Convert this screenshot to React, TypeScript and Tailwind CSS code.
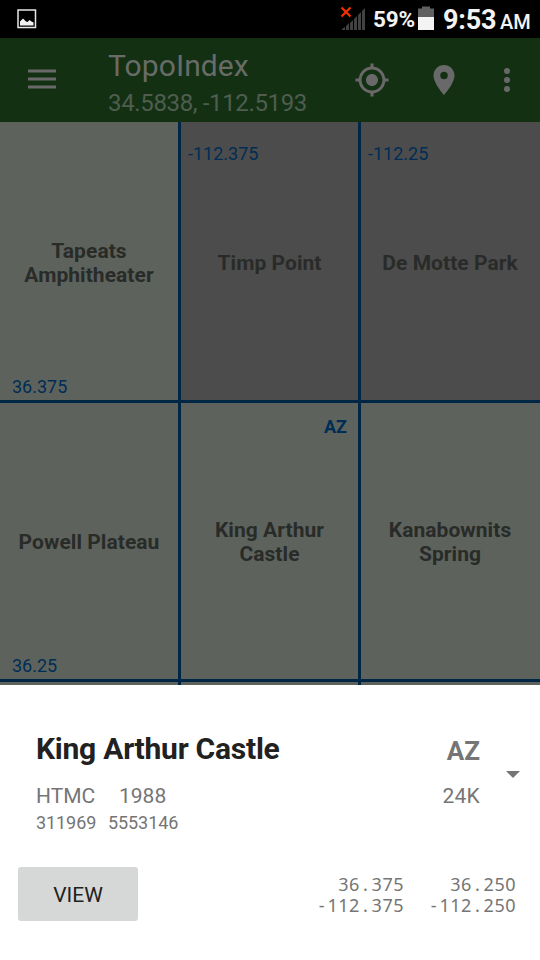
import React from "react";

type CellProps = {
  name: string;
  available?: boolean;
  lat?: string;
  lon?: string;
  state?: string;
  last?: boolean;
  top?: boolean;
};

function Cell({ name, available, lat, lon, state, last, top }: CellProps) {
  return (
    <div
      className={
        "relative flex items-center justify-center border-[#002646] px-3 text-center text-[21px] leading-6 font-bold tracking-[0.050px] text-[#292b29] " +
        (available ? "bg-[#5d635c] " : "bg-[#4c4c4c] ") +
        (top ? "pt-1 " : "pt-[2px] ") +
        (last ? "pr-[13px]" : "border-r-[3px]")
      }
    >
      <span className="whitespace-pre-line">{name}</span>
      {lon && (
        <span className="absolute top-[21px] left-[7px] text-lg leading-[22px] font-normal tracking-normal text-[#002d55]">{lon}</span>
      )}
      {lat && (
        <span className="absolute bottom-[2px] left-3 text-lg leading-[22px] font-normal tracking-normal text-[#002d55]">{lat}</span>
      )}
      {state && (
        <span className="absolute top-[13px] right-[11px] text-lg leading-[22px] font-bold tracking-normal text-[#002d55]">{state}</span>
      )}
    </div>
  );
}

function StatusBar() {
  return (
    <div className="flex h-[38px] items-center bg-black text-[#f3f3f3]">
      <svg className="ml-[17px] h-5 w-5" viewBox="0 0 20 20">
        <rect x="1" y="1" width="17.5" height="17.5" fill="none" stroke="#e8e8e8" strokeWidth="1.5" />
        <path d="M3 16.500V12.500L6 9.500l3 3 1.500.500 2-2 2 1.500 2 1v3z" fill="#f3f3f3" />
      </svg>
      <svg className="ml-[303px] h-[38px] w-7" viewBox="0 0 28 38">
        <path d="M1.500 7.500l9 9M10.500 7.500l-9 9" stroke="#f03000" strokeWidth="2.300" />
        <path
          d="M2 30v-1l3-2v3zM6 30v-4l3-3v7zM10 30v-7l3-3v10zM14 30V19l3-3v14zM18 30V15l3-3v18zM22 30V11l3-3v22z"
          fill="#424242"
        />
      </svg>
      <span className="ml-[5px] w-[43px] text-[22.500px] leading-[38px] font-bold tracking-[-0.200px] whitespace-nowrap">59%</span>
      <svg className="ml-[2px] h-[38px] w-4" viewBox="0 0 16 38">
        <path d="M0 8.500h4V6.500h8V8.500h4v8.500H0z" fill="#606060" />
        <path d="M0 17h16v13H0z" fill="#f3f3f3" />
      </svg>
      <span className="ml-[9px] flex items-baseline pt-1 whitespace-nowrap">
        <span className="w-[57px] text-[27px] leading-[38px] font-bold tracking-[-0.200px]">9:53</span>
        <span className="text-[20px] leading-[38px] font-medium">AM</span>
      </span>
    </div>
  );
}

function AppBar() {
  return (
    <header className="flex h-[84px] bg-[#133013] text-[#686b68]">
      <svg className="mt-[31px] ml-7 h-5 w-7" viewBox="0 0 28 20" fill="#696969">
        <path d="M0 .5h28v3H0zM0 8.500h28v3H0zM0 16.500h28v3H0z" />
      </svg>
      <div className="mt-[10px] ml-[52px] w-[246px] whitespace-nowrap">
        <h1 className="text-[30px] leading-9 font-normal tracking-[0.100px]">TopoIndex</h1>
        <p className="mt-[5px] text-2xl leading-7 tracking-[-0.350px] text-[#4f5d4f]">34.5838, -112.5193</p>
      </div>
      <svg className="mt-6 h-9 w-9" viewBox="0 0 24 24" fill="#696969">
        <path d="M12 8c-2.210 0-4 1.790-4 4s1.790 4 4 4 4-1.790 4-4-1.790-4-4-4zm8.940 3A8.994 8.994 0 0 0 13 3.060V1h-2v2.060A8.994 8.994 0 0 0 3.060 11H1v2h2.060A8.994 8.994 0 0 0 11 20.940V23h2v-2.060A8.994 8.994 0 0 0 20.940 13H23v-2h-2.060zM12 19c-3.870 0-7-3.130-7-7s3.130-7 7-7 7 3.130 7 7-3.130 7-7 7z" />
      </svg>
      <svg className="mt-6 ml-9 h-9 w-9" viewBox="0 0 24 24" fill="#696969">
        <path d="M12 2C8.130 2 5 5.130 5 9c0 5.250 7 13 7 13s7-7.750 7-13c0-3.870-3.130-7-7-7zm0 9.500a2.500 2.500 0 1 1 0-5 2.500 2.500 0 0 1 0 5z" />
      </svg>
      <svg className="mt-6 ml-[27px] h-9 w-9" viewBox="0 0 24 24" fill="#696969">
        <circle cx="12" cy="6" r="2" />
        <circle cx="12" cy="12" r="2" />
        <circle cx="12" cy="18" r="2" />
      </svg>
    </header>
  );
}

function Coord({ lat, lon }: { lat: [string, string]; lon: [string, string] }) {
  return (
    <div className="w-[88px] text-right font-['Noto_Sans','Open_Sans',sans-serif] text-lg leading-[21px] tracking-[0.500px] whitespace-nowrap text-[#757575]">
      <div>
        {lat[0]}
        <span className="px-[3.200px]">.</span>
        {lat[1]}
      </div>
      <div>
        <span className="px-[2.600px]">-</span>
        {lon[0]}
        <span className="px-[3.200px]">.</span>
        {lon[1]}
      </div>
    </div>
  );
}

function Sheet() {
  return (
    <section className="flex h-[275px] flex-col bg-white text-[#757575]">
      <div className="flex pt-[46px]">
        <div className="ml-9 w-[344px] whitespace-nowrap">
          <h2 className="text-[30px] leading-9 font-bold tracking-[-0.240px] text-[#212121]">King Arthur Castle</h2>
          <div className="mt-[15px] flex text-[21px] leading-7">
            <span className="w-[83px]">HTMC</span>
            <span>1988</span>
          </div>
          <div className="flex text-lg leading-[26px] tracking-[-0.080px]">
            <span className="w-[72px]">311969</span>
            <span>5553146</span>
          </div>
        </div>
        <div className="w-[100px] text-right">
          <div className="mt-[2px] text-[26px] leading-9 font-bold">AZ</div>
          <div className="mt-[13px] text-[21px] leading-7 tracking-[0.200px]">24K</div>
        </div>
        <svg className="mt-10 ml-[26px] h-[7px] w-[14px]" viewBox="0 0 14 7" fill="#757575">
          <path d="M0 0h14L7 7z" />
        </svg>
      </div>
      <div className="mt-[31px] flex">
        <button className="ml-[18px] h-[54px] w-[120px] rounded-[3px] bg-[#d6d8d7] pt-[3px] text-[21px] text-[#212121]">
          VIEW
        </button>
        <div className="mt-[7px] ml-[178px] flex gap-6">
          <Coord lat={["36", "375"]} lon={["112", "375"]} />
          <Coord lat={["36", "250"]} lon={["112", "250"]} />
        </div>
      </div>
    </section>
  );
}

export default function App() {
  return (
    <div className="flex h-[960px] w-[540px] flex-col overflow-hidden bg-black font-[Roboto,sans-serif]">
      <StatusBar />
      <AppBar />
      <main className="grid h-[563px] grid-cols-[181px_180px_179px] grid-rows-[278px_276px_3px] gap-y-[3px] overflow-hidden bg-[#002646]">
        <Cell name={"Tapeats\nAmphitheater"} available top lat="36.375" />
        <Cell name="Timp Point" top lon="-112.375" />
        <Cell name="De Motte Park" top lon="-112.25" last />
        <Cell name="Powell Plateau" available lat="36.25" />
        <Cell name={"King Arthur\nCastle"} available state="AZ" />
        <Cell name={"Kanabownits\nSpring"} available last />
        <Cell name="" available />
        <Cell name="" available />
        <Cell name="" available last />
      </main>
      <Sheet />
    </div>
  );
}
